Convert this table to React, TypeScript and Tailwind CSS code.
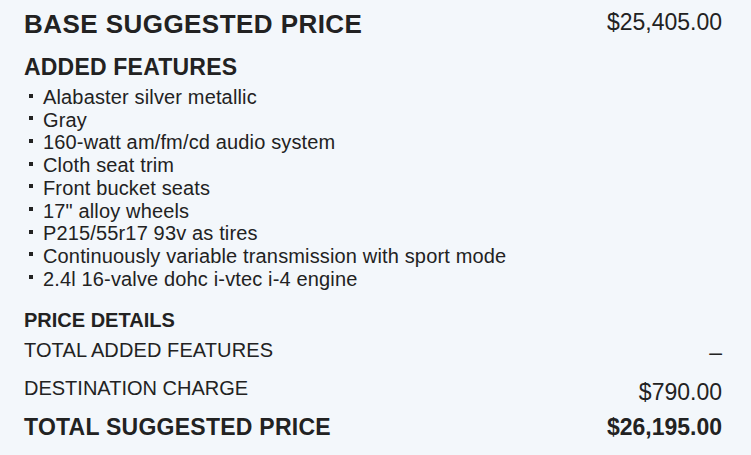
const features = [
  "Alabaster silver metallic",
  "Gray",
  "160-watt am/fm/cd audio system",
  "Cloth seat trim",
  "Front bucket seats",
  '17" alloy wheels',
  "P215/55r17 93v as tires",
  "Continuously variable transmission with sport mode",
  "2.4l 16-valve dohc i-vtec i-4 engine",
];

export default function App() {
  return (
    <div className="min-h-[455px] w-full bg-[#f3f7fb] pl-[24px] pr-[29px] pt-[9px] text-[#222] font-['Liberation_Sans',Arial,sans-serif]">
      <div className="flex items-start justify-between">
        <h1 className="text-[26px] font-bold leading-[30px] tracking-[0.45px]">BASE SUGGESTED PRICE</h1>
        <span className="text-[23px] leading-[27px]">$25,405.00</span>
      </div>

      <h2 className="mt-[14px] text-[23px] font-bold leading-[28px] tracking-[0.2px]">ADDED FEATURES</h2>
      <ul className="mt-[5px]">
        {features.map((f) => (
          <li key={f} className="flex items-start text-[20px] leading-[22.7px] tracking-[0.15px]">
            <span className="ml-[5px] mt-[7.5px] h-[4px] w-[4px] shrink-0 bg-[#222]" />
            <span className="ml-[10px]">{f}</span>
          </li>
        ))}
      </ul>

      <h3 className="mt-[18px] text-[20px] font-bold leading-[24px]">PRICE DETAILS</h3>

      <div className="mt-[6px] flex items-start justify-between">
        <span className="text-[20px] leading-[24px] tracking-[0.1px]">TOTAL ADDED FEATURES</span>
        <span className="text-[23px] leading-[28px]">–</span>
      </div>
      <div className="mt-[10px] flex items-start justify-between">
        <span className="text-[20px] leading-[24px]">DESTINATION CHARGE</span>
        <span className="mt-[2px] text-[23px] leading-[28px]">$790.00</span>
      </div>
      <div className="mt-[7px] flex items-start justify-between font-bold">
        <span className="text-[23px] leading-[28px] tracking-[0.25px]">TOTAL SUGGESTED PRICE</span>
        <span className="text-[23px] leading-[28px]">$26,195.00</span>
      </div>
    </div>
  );
}
